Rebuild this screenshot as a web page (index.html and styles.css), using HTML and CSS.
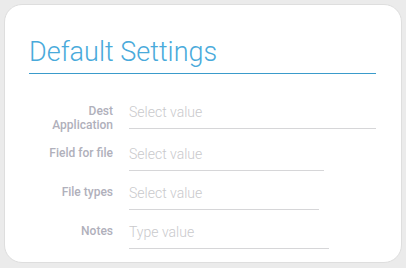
FILE: index.html
```html
<!DOCTYPE html>
<html>
<head>
<meta charset="utf-8">
<link rel="stylesheet" href="styles.css">
</head>
<body>
<div class="card">
  <h1 class="title">Default Settings</h1>
  <div class="rows">
    <div class="row">
      <div class="label">Dest<br>Application</div>
      <div class="field w1">Select value</div>
    </div>
    <div class="row">
      <div class="label">Field for file</div>
      <div class="field w2">Select value</div>
    </div>
    <div class="row">
      <div class="label">File types</div>
      <div class="field w3">Select value</div>
    </div>
    <div class="row">
      <div class="label">Notes</div>
      <div class="field w4">Type value</div>
    </div>
  </div>
</div>
</body>
</html>
```
FILE: styles.css
```css
html, body {
  margin: 0;
  padding: 0;
  background: #ebebeb;
  font-family: Roboto, "Liberation Sans", sans-serif;
}
.card {
  box-sizing: border-box;
  margin: 4px;
  width: 398px;
  height: 259px;
  background: #ffffff;
  border: 1px solid #dedede;
  border-radius: 18px;
  padding: 31px 25px 0 24px;
}
.title {
  margin: 0;
  font-size: 27px;
  line-height: 32px;
  font-weight: 300;
  color: #49aadb;
  padding-bottom: 5px;
  border-bottom: 1px solid #3a9bcb;
}
.rows {
  display: flex;
  flex-direction: column;
  gap: 12px;
  margin-top: 28px;
}
.row {
  display: flex;
  align-items: flex-start;
  gap: 16px;
}
.label {
  width: 84px;
  flex: none;
  text-align: right;
  font-size: 12px;
  line-height: 14px;
  font-weight: 500;
  color: #b0b0bb;
  padding-top: 2px;
}
.field {
  font-size: 14px;
  line-height: 20px;
  font-weight: 300;
  color: #c9c9cc;
  padding-bottom: 6px;
  border-bottom: 1px solid #d6d6d8;
}
.w1 { width: 247px; }
.w2 { width: 195px; }
.w3 { width: 190px; }
.w4 { width: 200px; }
```
